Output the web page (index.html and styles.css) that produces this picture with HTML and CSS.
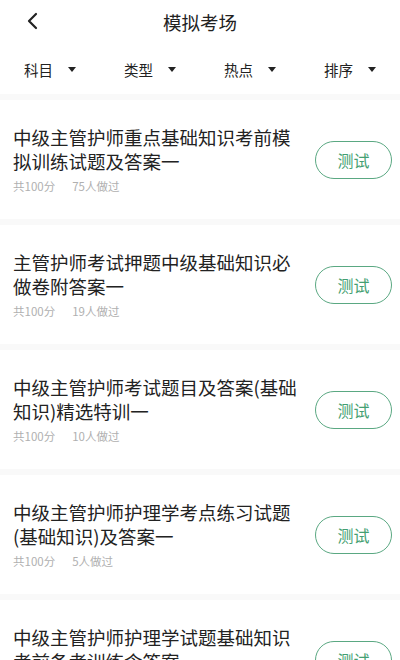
FILE: index.html
```html
<!DOCTYPE html>
<html lang="zh">
<head>
<meta charset="utf-8">
<link rel="stylesheet" href="styles.css">
</head>
<body>
<div class="app">
  <header class="topbar">
    <svg class="back" width="14" height="18" viewBox="0 0 14 18"><path d="M10 2 L3 9 L10 16" fill="none" stroke="#222" stroke-width="2.2" stroke-linecap="round" stroke-linejoin="round"/></svg>
    <h1 class="title">模拟考场</h1>
  </header>
  <nav class="filters">
    <div class="filter"><span>科目</span><i class="tri"></i></div>
    <div class="filter"><span>类型</span><i class="tri"></i></div>
    <div class="filter"><span>热点</span><i class="tri"></i></div>
    <div class="filter"><span>排序</span><i class="tri"></i></div>
  </nav>
  <main class="list">
    <div class="item">
      <div class="info">
        <div class="name">中级主管护师重点基础知识考前模拟训练试题及答案一</div>
        <div class="meta"><span>共100分</span><span>75人做过</span></div>
      </div>
      <button class="btn">测试</button>
    </div>
    <div class="item">
      <div class="info">
        <div class="name">主管护师考试押题中级基础知识必做卷附答案一</div>
        <div class="meta"><span>共100分</span><span>19人做过</span></div>
      </div>
      <button class="btn">测试</button>
    </div>
    <div class="item">
      <div class="info">
        <div class="name">中级主管护师考试题目及答案(基础知识)精选特训一</div>
        <div class="meta"><span>共100分</span><span>10人做过</span></div>
      </div>
      <button class="btn">测试</button>
    </div>
    <div class="item">
      <div class="info">
        <div class="name">中级主管护师护理学考点练习试题(基础知识)及答案一</div>
        <div class="meta"><span>共100分</span><span>5人做过</span></div>
      </div>
      <button class="btn">测试</button>
    </div>
    <div class="item">
      <div class="info">
        <div class="name">中级主管护师护理学试题基础知识考前备考训练含答案一</div>
        <div class="meta"><span>共100分</span><span>3人做过</span></div>
      </div>
      <button class="btn">测试</button>
    </div>
  </main>
</div>
</body>
</html>
```
FILE: styles.css
```css
* { box-sizing: border-box; }
html, body { margin: 0; padding: 0; background: #fff; }
body {
  font-family: "Noto Sans CJK SC", "Noto Sans", sans-serif;
  color: #222;
  width: 400px;
  height: 660px;
  overflow: hidden;
}
.topbar {
  height: 45px;
  position: relative;
  display: flex;
  align-items: center;
  justify-content: center;
}
.back {
  position: absolute;
  left: 26px;
  top: 12px;
}
.title {
  margin: 0;
  font-size: 18.5px;
  font-weight: 400;
  line-height: 24px;
  color: #222;
  margin-top: -2px;
}
.filters {
  height: 49px;
  display: grid;
  grid-template-columns: repeat(4, 1fr);
  align-items: center;
}
.filter {
  display: flex;
  align-items: center;
  padding-left: 24px;
  font-size: 14.5px;
  color: #222;
  line-height: 20px;
}
.tri {
  margin-left: 15px;
  width: 0;
  height: 0;
  border-left: 4.5px solid transparent;
  border-right: 4.5px solid transparent;
  border-top: 5px solid #222;
}
.list {
  border-top: 6px solid #f9f9f9;
}
.item {
  height: 125px;
  display: flex;
  align-items: center;
  justify-content: space-between;
  padding: 0 8px 0 13px;
  border-bottom: 6px solid #f9f9f9;
}
.info {
  width: 292px;
  padding-bottom: 1px;
}
.name {
  font-size: 18.5px;
  line-height: 24px;
  color: #222;
}
.meta {
  margin-top: 5px;
  font-size: 11.5px;
  line-height: 16px;
  color: #b0b0b0;
  display: flex;
  gap: 17px;
}
.btn {
  width: 77px;
  height: 38px;
  border: 1.5px solid #5aa882;
  border-radius: 19px;
  background: #fff;
  color: #449f72;
  font-family: "Noto Sans CJK SC", sans-serif;
  font-size: 16px;
  padding: 0;
  margin-top: 1px;
}
```
